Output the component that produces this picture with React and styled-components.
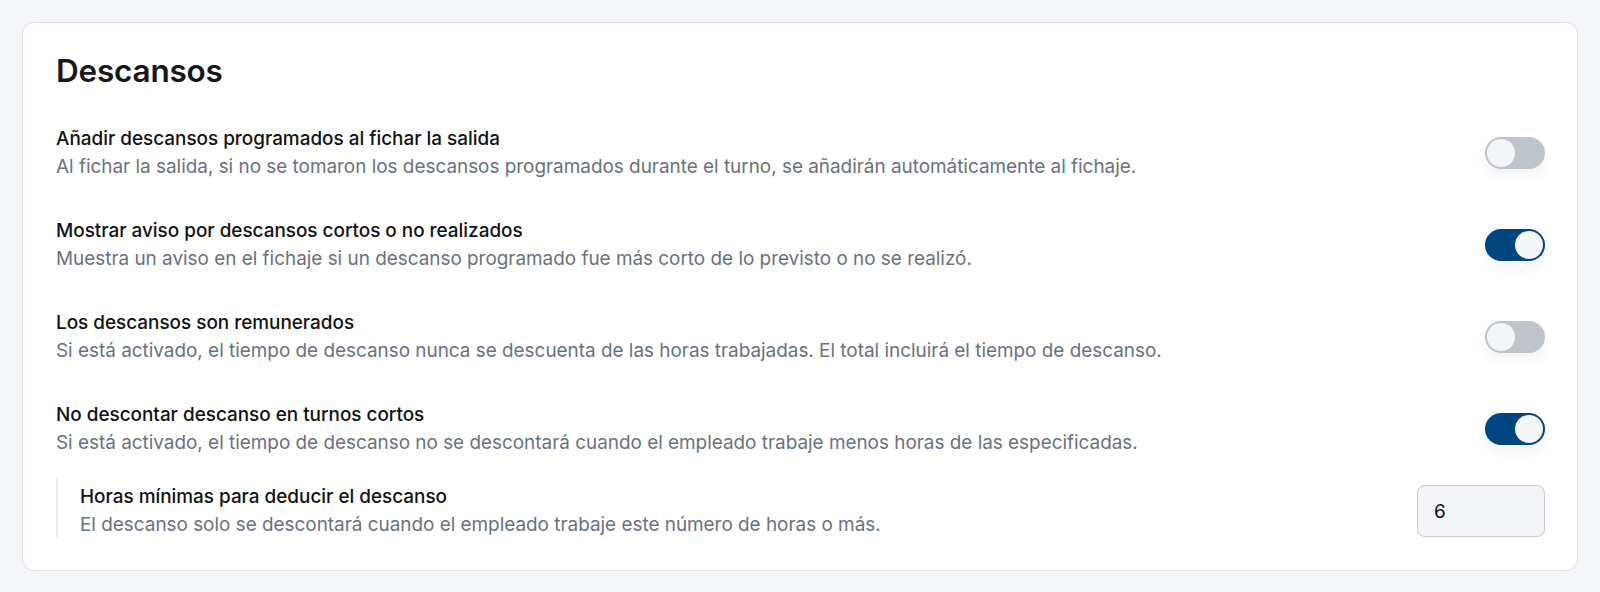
import React, { useState } from 'react';
import styled, { createGlobalStyle } from 'styled-components';

const GlobalStyle = createGlobalStyle`
  html, body {
    margin: 0;
    padding: 0;
    background: #f5f6fa;
    font-family: Inter, "Noto Sans", "Liberation Sans", sans-serif;
    -webkit-font-smoothing: antialiased;
  }
`;

const Page = styled.div`
  padding: 22px;
`;

const Card = styled.section`
  background: #ffffff;
  border: 1px solid #dfe1e6;
  border-radius: 12px;
  padding: 29px 32px 31px 33px;
  display: flex;
  flex-direction: column;
`;

const Title = styled.h2`
  margin: 0 0 35px;
  font-size: 31.5px;
  line-height: 38px;
  font-weight: 600;
  color: #18181b;
  letter-spacing: -0.2px;
`;

const List = styled.div`
  display: flex;
  flex-direction: column;
  gap: 36px;
`;

const Row = styled.div`
  display: flex;
  align-items: center;
  justify-content: space-between;
  gap: 24px;
`;

const Text = styled.div`
  display: flex;
  flex-direction: column;
`;

const Label = styled.div`
  font-size: 18.9px;
  line-height: 28px;
  font-weight: 500;
  color: #111214;
`;

const Hint = styled.div`
  font-size: 18.9px;
  line-height: 28px;
  color: #6b7180;
`;

const Nested = styled.div`
  display: flex;
  align-items: center;
  justify-content: space-between;
  margin-top: -15px;
  padding: 5px 0 0 22px;
  border-left: 2px solid #eceef1;
`;

const Track = styled.button`
  width: 60px;
  height: 32px;
  border-radius: 16px;
  border: none;
  padding: 2px;
  flex-shrink: 0;
  cursor: pointer;
  display: flex;
  justify-content: ${(p) => (p.$on ? 'flex-end' : 'flex-start')};
  background: ${(p) => (p.$on ? '#00457f' : '#bfc3ca')};
  box-shadow: 0 6px 14px rgba(30, 40, 60, 0.06);
`;

const Knob = styled.span`
  width: 28px;
  height: 28px;
  border-radius: 50%;
  background: #f3f5f9;
`;

const NumberInput = styled.input`
  width: 128px;
  height: 52px;
  box-sizing: border-box;
  border: 1px solid #c9ccd2;
  border-radius: 8px;
  background: #f4f5f8;
  padding: 0 16px;
  font-family: inherit;
  font-size: 19px;
  color: #111214;
  outline: none;
`;

const Toggle = ({ on, onChange }) => (
  <Track $on={on} onClick={onChange} aria-pressed={on}>
    <Knob />
  </Track>
);

const settings = [
  {
    id: 'add',
    label: 'Añadir descansos programados al fichar la salida',
    hint: 'Al fichar la salida, si no se tomaron los descansos programados durante el turno, se añadirán automáticamente al fichaje.',
    on: false,
  },
  {
    id: 'warn',
    label: 'Mostrar aviso por descansos cortos o no realizados',
    hint: 'Muestra un aviso en el fichaje si un descanso programado fue más corto de lo previsto o no se realizó.',
    on: true,
  },
  {
    id: 'paid',
    label: 'Los descansos son remunerados',
    hint: 'Si está activado, el tiempo de descanso nunca se descuenta de las horas trabajadas. El total incluirá el tiempo de descanso.',
    on: false,
  },
  {
    id: 'short',
    label: 'No descontar descanso en turnos cortos',
    hint: 'Si está activado, el tiempo de descanso no se descontará cuando el empleado trabaje menos horas de las especificadas.',
    on: true,
  },
];

export default function App() {
  const [values, setValues] = useState(
    Object.fromEntries(settings.map((s) => [s.id, s.on]))
  );
  const [hours, setHours] = useState('6');

  const flip = (id) => setValues((v) => ({ ...v, [id]: !v[id] }));

  return (
    <Page>
      <GlobalStyle />
      <Card>
        <Title>Descansos</Title>
        <List>
          {settings.map((s) => (
            <Row key={s.id}>
              <Text>
                <Label>{s.label}</Label>
                <Hint>{s.hint}</Hint>
              </Text>
              <Toggle on={values[s.id]} onChange={() => flip(s.id)} />
            </Row>
          ))}
          {values.short && (
            <Nested>
              <Text>
                <Label>Horas mínimas para deducir el descanso</Label>
                <Hint>El descanso solo se descontará cuando el empleado trabaje este número de horas o más.</Hint>
              </Text>
              <NumberInput
                type="text"
                value={hours}
                onChange={(e) => setHours(e.target.value)}
              />
            </Nested>
          )}
        </List>
      </Card>
    </Page>
  );
}
